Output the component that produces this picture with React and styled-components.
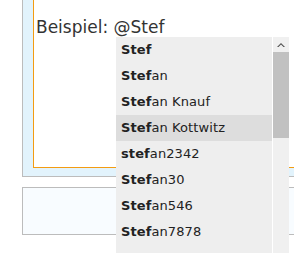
import React from 'react';
import styled, { createGlobalStyle } from 'styled-components';

const GlobalStyle = createGlobalStyle`
  html, body {
    margin: 0;
    padding: 0;
    background: #fff;
    overflow: hidden;
  }
  body {
    font-family: "DejaVu Sans", Verdana, sans-serif;
  }
`;

const Page = styled.div`
  position: relative;
  width: 294px;
  height: 253px;
  padding-left: 22px;
  box-sizing: border-box;
`;

const Panel = styled.div`
  width: 320px;
  border: 1px solid #bcbcbc;
  border-top: none;
  background: #e2f3fc;
  padding: 0 0 8px 10px;
`;

const Editor = styled.div`
  height: 168px;
  background: #fff;
  border: 1px solid #f39c12;
  border-top: none;
  padding: 19px 0 0 2px;
  box-sizing: border-box;
  font-size: 17px;
  color: #333;
  line-height: 17px;
`;

const Preview = styled.div`
  margin-top: 10px;
  width: 320px;
  height: 48px;
  box-sizing: border-box;
  border: 1px solid #bcbcbc;
  background: #f8fcff;
`;

const Dropdown = styled.div`
  position: absolute;
  left: 116px;
  top: 37px;
  width: 173px;
  height: 216px;
  display: flex;
  background: #fff;
`;

const List = styled.ul`
  list-style: none;
  margin: 0;
  padding: 0;
  width: 156px;
  background: #eeeeee;
`;

const Item = styled.li`
  height: 26px;
  line-height: 26px;
  padding-left: 5px;
  font-size: 13px;
  letter-spacing: 0.1px;
  color: #222;
  white-space: nowrap;
  background: ${p => (p.active ? '#dddddd' : 'transparent')};
  b {
    font-weight: bold;
  }
`;

const Scrollbar = styled.div`
  margin-left: 1px;
  width: 16px;
  background: #f0f0f0;
  display: flex;
  flex-direction: column;
`;

const Arrow = styled.div`
  height: 15px;
  display: flex;
  align-items: center;
  justify-content: center;
`;

const Thumb = styled.div`
  height: 86px;
  background: #c1c1c1;
`;

const users = [
  ['Stef', ''],
  ['Stef', 'an'],
  ['Stef', 'an Knauf'],
  ['Stef', 'an Kottwitz'],
  ['stef', 'an2342'],
  ['Stef', 'an30'],
  ['Stef', 'an546'],
  ['Stef', 'an7878'],
];

export default function App() {
  return (
    <Page>
      <GlobalStyle />
      <Panel>
        <Editor>Beispiel: @Stef</Editor>
      </Panel>
      <Preview />
      <Dropdown>
        <List>
          {users.map(([match, rest], i) => (
            <Item key={i} active={i === 3}>
              <b>{match}</b>{rest}
            </Item>
          ))}
        </List>
        <Scrollbar>
          <Arrow>
            <svg width="8" height="5" viewBox="0 0 8 5">
              <path d="M0 5 L4 1 L8 5 L6.5 5 L4 2.5 L1.5 5 Z" fill="#505050" />
            </svg>
          </Arrow>
          <Thumb />
        </Scrollbar>
      </Dropdown>
    </Page>
  );
}
